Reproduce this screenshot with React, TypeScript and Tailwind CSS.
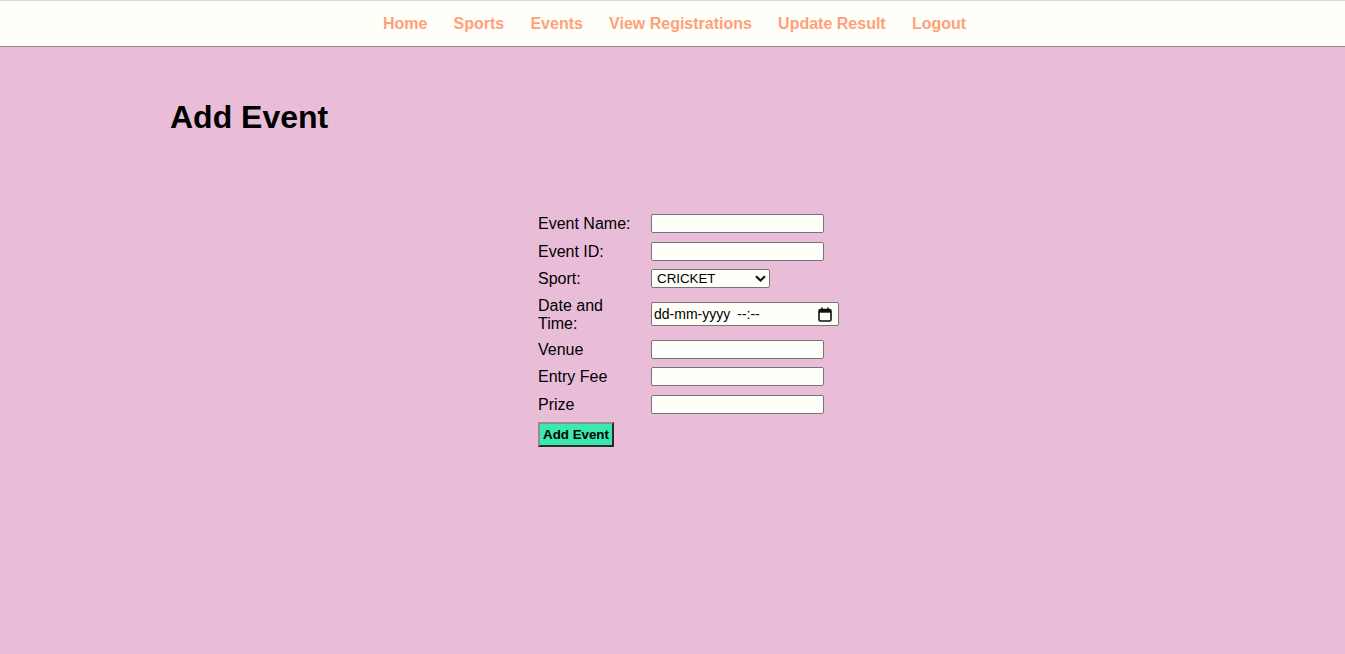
import { useState } from "react";

const links = ["Home", "Sports", "Events", "View Registrations", "Update Result", "Logout"];

const fields: { label: string; kind: "text" | "select" | "date"; h: string }[] = [
  { label: "Event Name:", kind: "text", h: "h-[28px]" },
  { label: "Event ID:", kind: "text", h: "h-[28px]" },
  { label: "Sport:", kind: "select", h: "h-[27px]" },
  { label: "Date and Time:", kind: "date", h: "h-[44px]" },
  { label: "Venue", kind: "text", h: "h-[26px]" },
  { label: "Entry Fee", kind: "text", h: "h-[28px]" },
  { label: "Prize", kind: "text", h: "h-[28px]" },
];

function SportSelect() {
  const [sport, setSport] = useState("CRICKET");
  return (
    <div className="relative h-[19px] w-[119px]">
      <select
        value={sport}
        onChange={(e) => setSport(e.target.value)}
        className="block h-full w-full appearance-none rounded-[2px] border border-[#767676] bg-[#fffffa] pl-[5px] text-[13.33px] leading-none text-black"
      >
        <option>CRICKET</option>
        <option>FOOTBALL</option>
        <option>BASKETBALL</option>
        <option>KABADDI</option>
      </select>
      <svg
        className="pointer-events-none absolute right-[4px] top-[6px] h-[7px] w-[11px]"
        viewBox="0 0 11 7"
        fill="none"
      >
        <path d="M1 1.2 5.5 5.5 10 1.2" stroke="#111" strokeWidth="2.2" />
      </svg>
    </div>
  );
}

function DateTimeBox() {
  return (
    <div className="flex h-[24px] w-[188px] items-center justify-between rounded-[2px] border border-[#767676] bg-[#fffffa] pl-[2px] pr-[6px] text-[14px] text-black">
      <span>
        dd-mm-yyyy<span className="ml-[7px]">--:--</span>
      </span>
      <svg className="h-[15px] w-[14px]" viewBox="0 0 14 15" fill="none">
        <rect x="1" y="2.5" width="12" height="11.5" rx="1.5" stroke="#111" strokeWidth="1.6" />
        <rect x="1" y="2.5" width="12" height="3.2" fill="#111" />
        <path d="M4 0.5v3M10 0.5v3" stroke="#111" strokeWidth="1.6" />
      </svg>
    </div>
  );
}

export default function App() {
  return (
    <div className="min-h-screen bg-[#e9bdd8] font-['Liberation_Sans',Arial,sans-serif] text-black">
      <nav className="flex h-[47px] items-center justify-center gap-[26.2px] border-t border-b border-t-[#d8d8d8] border-b-[#8c8c8c] bg-[#fffffa] pl-[4px]">
        {links.map((l) => (
          <a key={l} href="#" className="text-[16px] font-bold text-[#ffa07a]">
            {l}
          </a>
        ))}
      </nav>

      <h1 className="ml-[170px] mt-[52px] text-[32px] font-bold leading-[37px]">Add Event</h1>

      <form className="ml-[538px] mt-[73px] flex flex-col" onSubmit={(e) => e.preventDefault()}>
        {fields.map((f) => (
          <div key={f.label} className={`flex items-center gap-[8px] ${f.h}`}>
            <label className="w-[105px] pt-[1px] text-[16px] leading-[18px]">{f.label}</label>
            {f.kind === "text" && (
              <input
                type="text"
                className="h-[19px] w-[173px] rounded-[2px] border border-[#767676] bg-[#fffffa] px-[2px] text-[13.33px]"
              />
            )}
            {f.kind === "select" && <SportSelect />}
            {f.kind === "date" && <DateTimeBox />}
          </div>
        ))}
        <div className="mt-[4px]">
          <button
            type="submit"
            className="block h-[25px] w-[76px] border-2 border-t-[#8f8f8f] border-l-[#8f8f8f] border-b-[#2b2b2b] border-r-[#2b2b2b] bg-[#3ae8b0] text-[13.33px] font-bold text-black"
          >
            Add Event
          </button>
        </div>
      </form>
    </div>
  );
}
